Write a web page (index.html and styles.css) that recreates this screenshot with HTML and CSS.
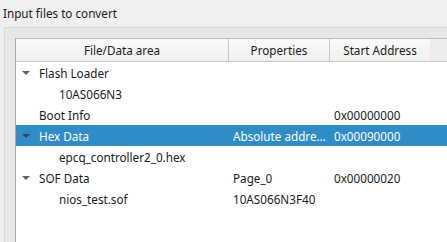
FILE: index.html
```html
<!DOCTYPE html>
<html>
<head>
    <link rel="stylesheet" href="styles.css">
    <title>Convert Programming Files</title>
</head>
<body>
    <div class="group-title">Input files to convert</div>
    <div class="group">
        <div class="tree">
            <div class="header">
                <div class="hcell">File/Data area</div>
                <div class="hcell">Properties</div>
                <div class="hcell">Start Address</div>
            </div>
            <div class="row">
                <div class="cell"><span class="arrow"></span>Flash Loader</div>
                <div class="cell"></div>
                <div class="cell"></div>
            </div>
            <div class="row">
                <div class="cell child">10AS066N3</div>
                <div class="cell"></div>
                <div class="cell"></div>
            </div>
            <div class="row">
                <div class="cell top">Boot Info</div>
                <div class="cell"></div>
                <div class="cell">0x00000000</div>
            </div>
            <div class="row selected">
                <div class="cell"><span class="arrow"></span>Hex Data</div>
                <div class="cell">Absolute addre…</div>
                <div class="cell">0x00090000</div>
            </div>
            <div class="row">
                <div class="cell child">epcq_controller2_0.hex</div>
                <div class="cell"></div>
                <div class="cell"></div>
            </div>
            <div class="row">
                <div class="cell"><span class="arrow"></span>SOF Data</div>
                <div class="cell">Page_0</div>
                <div class="cell">0x00000020</div>
            </div>
            <div class="row">
                <div class="cell child">nios_test.sof</div>
                <div class="cell">10AS066N3F40</div>
                <div class="cell"></div>
            </div>
        </div>
    </div>
</body>
</html>
```

FILE: styles.css
```css
* {
    box-sizing: border-box;
}
body {
    margin: 0;
    background-color: #efefef;
    font-family: "Noto Sans", "Open Sans", sans-serif;
    font-size: 11.7px;
    color: #1a1a1a;
    overflow: hidden;
    height: 242px;
}
.group-title {
    height: 27px;
    line-height: 27px;
    padding-left: 3px;
}
.group {
    margin-left: 4px;
    border-left: 1px solid #d6d6d6;
    border-top: 1px solid #d6d6d6;
    background-color: #e8e8e8;
    padding: 10px 0 0 10px;
    height: 215px;
}
.tree {
    border-left: 1px solid #a9a9a9;
    border-top: 1px solid #bdbdbd;
    background-color: white;
    height: 204px;
}
.header {
    display: grid;
    grid-template-columns: 213px 101px 100px 1fr;
    height: 23px;
    background-color: #ececec;
    border-bottom: 1px solid #c4c4c4;
}
.hcell {
    text-align: center;
    line-height: 22px;
    background: linear-gradient(#fafafa, #f0f0f0);
    border-right: 1px solid #c8c8c8;
}
.hcell:nth-child(3) {
    border-right: none;
}
.row {
    display: grid;
    grid-template-columns: 213px 101px 100px;
    height: 21px;
    line-height: 21px;
}
.row .cell {
    white-space: nowrap;
    overflow: hidden;
    padding: 1px 0 0 4px;
}
.row .cell:first-child {
    display: flex;
    align-items: center;
    padding-left: 6px;
}
.row .cell.child {
    padding-left: 43px;
}
.row .cell.top {
    padding-left: 23px;
}
.arrow {
    width: 0;
    height: 0;
    border-left: 4px solid transparent;
    border-right: 4px solid transparent;
    border-top: 4px solid #606060;
    margin-right: 9px;
    margin-top: -1px;
}
.selected {
    background-color: #308cc6;
    color: white;
}
.selected .arrow {
    border-top-color: #404040;
}
```
